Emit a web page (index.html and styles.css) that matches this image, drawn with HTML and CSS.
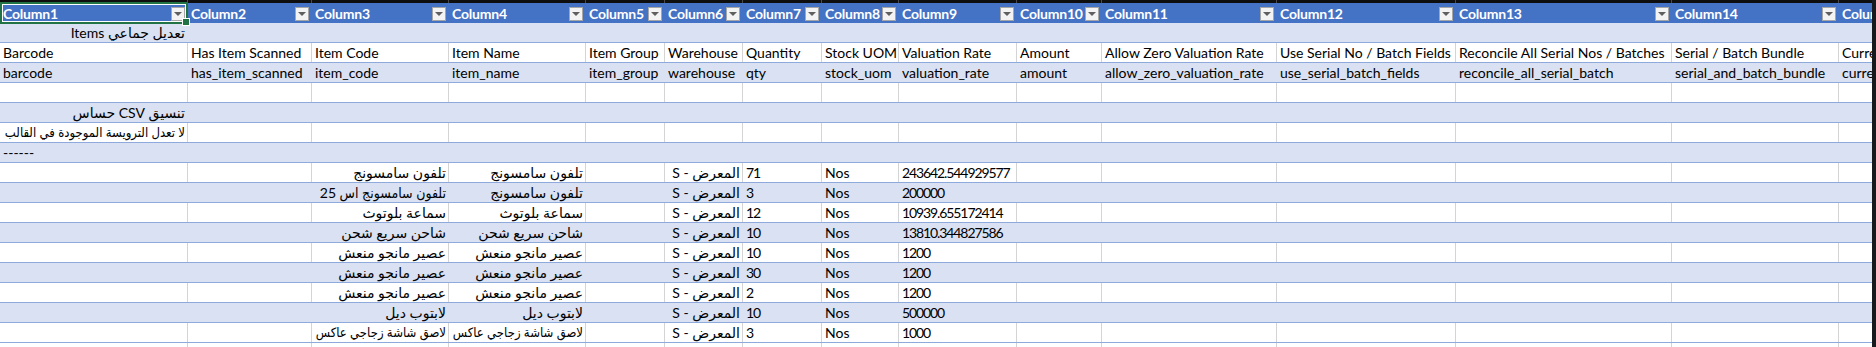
FILE: index.html
```html
<!DOCTYPE html>
<html lang="en">
<head>
    <meta charset="UTF-8">
    <title>Stock Reconciliation - Excel</title>
    <link rel="stylesheet" href="styles.css">
</head>
<body>
    <div class="screen">
        <div class="sheet" id="sheet">
            <div class="topband" id="topband"></div>
            <div class="row head" id="head"></div>
        </div>
        <div class="scrollbar"></div>
    </div>

    <script>
        const sheet = document.getElementById("sheet");
        const COLS = 15;

        // franja negra de arriba con las lineas de columna
        const band = document.getElementById("topband");
        for (let i = 0; i < COLS; i++) {
            band.appendChild(document.createElement("span"));
        }

        // cabecera de la tabla
        const head = document.getElementById("head");
        for (let i = 1; i <= COLS; i++) {
            const cell = document.createElement("div");
            cell.className = "cell";
            if (i === 1) cell.classList.add("selected");
            const name = document.createElement("span");
            name.textContent = "Column" + i;
            const drop = document.createElement("span");
            drop.className = "drop";
            cell.appendChild(name);
            cell.appendChild(drop);
            head.appendChild(cell);
        }

        const labels = ["Barcode", "Has Item Scanned", "Item Code", "Item Name", "Item Group", "Warehouse",
            "Quantity", "Stock UOM", "Valuation Rate", "Amount", "Allow Zero Valuation Rate",
            "Use Serial No / Batch Fields", "Reconcile All Serial Nos / Batches", "Serial / Batch Bundle",
            "Current Serial No"];
        const fields = ["barcode", "has_item_scanned", "item_code", "item_name", "item_group", "warehouse",
            "qty", "stock_uom", "valuation_rate", "amount", "allow_zero_valuation_rate",
            "use_serial_batch_fields", "reconcile_all_serial_batch", "serial_and_batch_bundle",
            "current_serial_no"];

        const wh = "المعرض - S";
        const items = [
            ["تلفون سامسونج", "تلفون سامسونج", "71", "243642.544929577"],
            ["تلفون سامسونج اس 25", "تلفون سامسونج", "3", "200000"],
            ["سماعة بلوتوث", "سماعة بلوتوث", "12", "10939.655172414"],
            ["شاحن سريع شحن", "شاحن سريع شحن", "10", "13810.344827586"],
            ["عصير مانجو منعش", "عصير مانجو منعش", "10", "1200"],
            ["عصير مانجو منعش", "عصير مانجو منعش", "30", "1200"],
            ["عصير مانجو منعش", "عصير مانجو منعش", "2", "1200"],
            ["لابتوب ديل", "لابتوب ديل", "10", "500000"],
            ["لاصق شاشة زجاجي عاكس", "لاصق شاشة زجاجي عاكس", "3", "1000"]
        ];

        const rows = [
            ["تعديل جماعي Items"],
            labels,
            fields,
            [],
            ["تنسيق CSV حساس"],
            ["لا تعدل الترويسة الموجودة في القالب"],
            ["------"]
        ];
        items.forEach(it => {
            rows.push(["", "", it[0], it[1], "", wh, it[2], "Nos", it[3]]);
        });

        const arabic = /[\u0600-\u06FF]/;
        const number = /^[\d.]+$/;

        function addRow(values, cls) {
            const row = document.createElement("div");
            row.className = "row " + cls;
            for (let i = 0; i < COLS; i++) {
                const cell = document.createElement("div");
                cell.className = "cell";
                const v = values[i] || "";
                cell.textContent = v;
                if (arabic.test(v)) cell.classList.add("rtl");
                if (number.test(v)) cell.classList.add("num");
                row.appendChild(cell);
            }
            sheet.appendChild(row);
        }

        rows.forEach((r, i) => addRow(r, i % 2 === 0 ? "band" : ""));
        // fila fuera de la tabla
        addRow([], "plain");

        // el texto arabe ocupa mas: primero fuente condensada, luego se reduce
        document.querySelectorAll(".rtl").forEach(cell => {
            if (cell.scrollWidth <= cell.clientWidth) return;
            cell.classList.add("tight");
            let size = 14;
            while (cell.scrollWidth > cell.clientWidth && size > 10) {
                size -= 0.25;
                cell.style.fontSize = size + "px";
            }
        });
    </script>
</body>
</html>
```
FILE: styles.css
```css
* {
    box-sizing: border-box;
}
body {
    margin: 0;
    background: #fff;
    font-family: Lato, "DejaVu Sans", sans-serif;
    font-size: 14px;
    color: #000;
    overflow: hidden;
}
.screen {
    display: flex;
    height: 347px;
}
.sheet {
    width: 1872px;
    overflow: hidden;
    position: relative;
}
.scrollbar {
    width: 4px;
    background: #17191c;
}

.topband, .row {
    display: grid;
    grid-template-columns: 188px 124px 137px 137px 79px 78px 79px 77px 118px 85px 175px 179px 216px 167px 140px;
}
.topband {
    height: 3px;
    background: #0e0e0e;
}
.topband span {
    border-right: 1px solid #4a4a4a;
}

.row {
    height: 20px;
    border-bottom: 1px solid #8ea9db;
}
.row.plain {
    border-bottom: none;
}
.cell {
    border-right: 1px solid #d4d4d4;
    padding: 0 3px;
    white-space: nowrap;
    overflow: hidden;
    line-height: 19px;
}
.band {
    background: #d9e1f2;
}
.band .cell {
    border-right-color: transparent;
}
.rtl {
    direction: rtl;
    text-align: right;
    padding-right: 2px;
}
.rtl.tight {
    font-family: Lato, "DejaVu Sans Condensed", "DejaVu Sans", sans-serif;
}
.num {
    letter-spacing: -1.1px;
}

/* cabecera azul */
.head {
    background: #4472c4;
    border-bottom: none;
}
.head .cell {
    border-right-color: transparent;
    color: #fff;
    font-weight: 700;
    letter-spacing: -0.2px;
    display: flex;
    align-items: center;
    justify-content: space-between;
    padding: 0 2px 0 3px;
    overflow: visible;
}
.drop {
    width: 14px;
    height: 14px;
    margin-top: 2px;
    flex-shrink: 0;
    background: #f3f3f3;
    border: 1px solid #a6a6a6;
    display: flex;
    align-items: center;
    justify-content: center;
}
.drop::after {
    content: '';
    border-left: 4px solid transparent;
    border-right: 4px solid transparent;
    border-top: 4px solid #5f5f5f;
}

/* celda activa */
.selected {
    position: relative;
}
.selected::before {
    content: '';
    position: absolute;
    top: -1px;
    left: 0;
    right: -1px;
    bottom: -1px;
    border: 2px solid #217346;
    box-shadow: inset 0 0 0 1px #fff;
    z-index: 2;
}
.selected::after {
    content: '';
    position: absolute;
    right: -3px;
    bottom: -3px;
    width: 6px;
    height: 6px;
    background: #217346;
    border: 1px solid #fff;
    z-index: 3;
}
```
